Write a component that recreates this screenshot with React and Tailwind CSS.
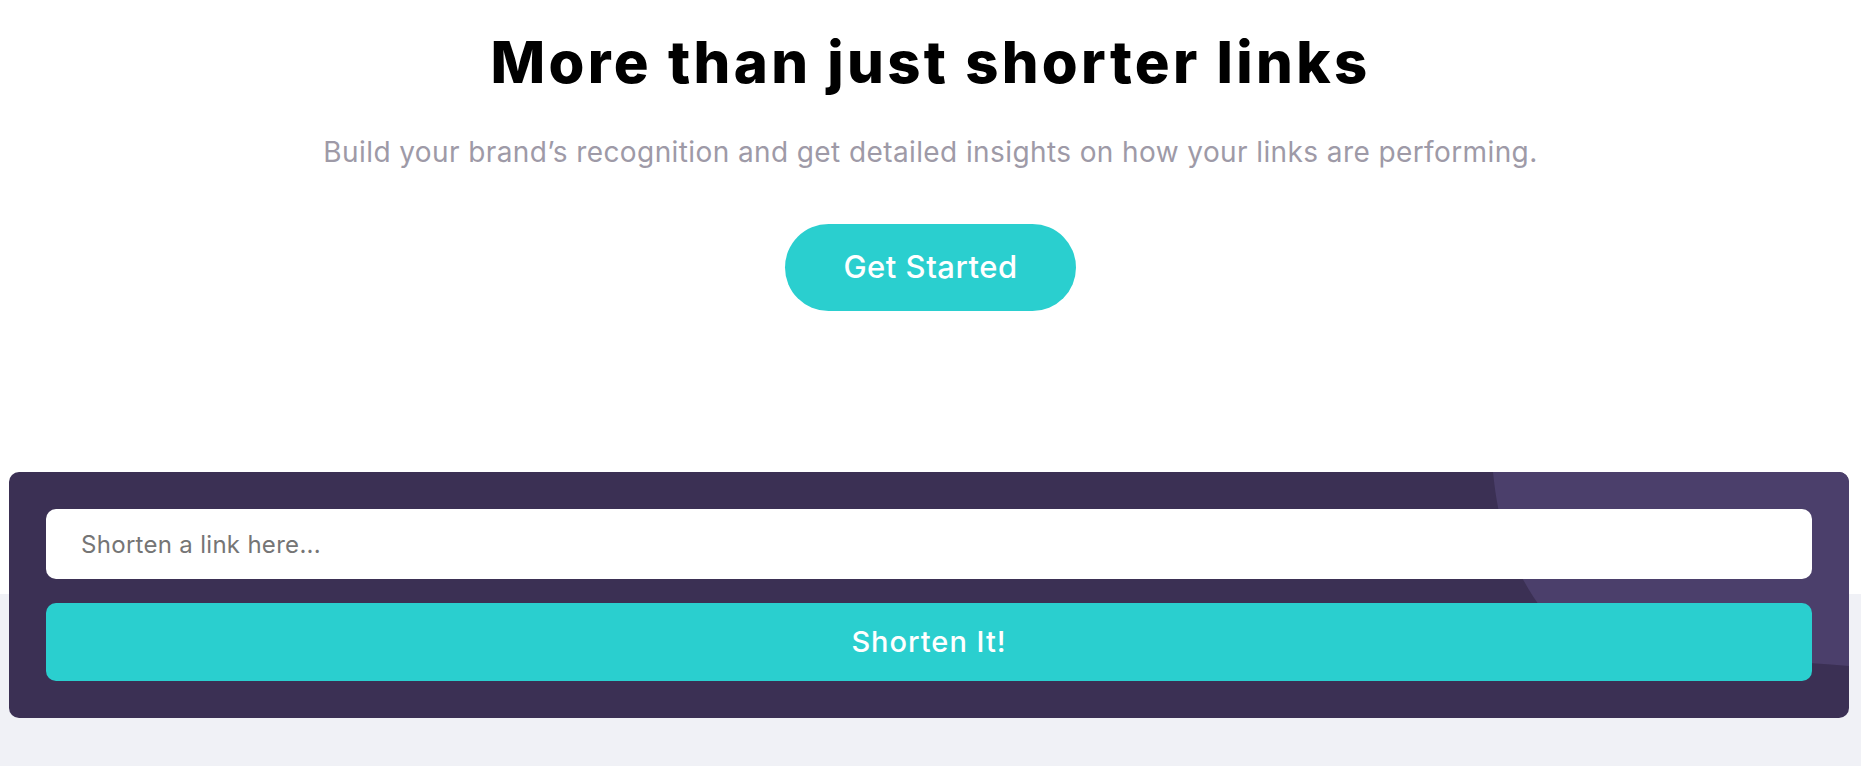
export default function App() {
  return (
    <div className="min-h-screen bg-[linear-gradient(to_bottom,#ffffff_594px,#f0f1f6_594px)] font-['Inter',sans-serif]">
      <section className="flex flex-col items-center pt-[33px] text-center">
        <h1 className="text-[58px] font-extrabold leading-none tracking-[3.3px] text-black">More than just shorter links</h1>
        <p className="mt-[47px] text-[28px] leading-none tracking-[0.4px] text-[#9e9aa7]">
          Build your brand’s recognition and get detailed insights on how your links are performing.
        </p>
        <a
          href="#"
          className="mt-[58px] flex h-[87px] w-[291px] items-center justify-center rounded-full bg-[#2acfcf] text-[31px] font-medium tracking-[0.5px] text-white"
        >
          Get Started
        </a>
      </section>

      <div className="pl-[9px] pr-[12px] pt-[161px]">
        <form className="relative flex flex-col gap-[24px] overflow-hidden rounded-[10px] bg-[#3b3054] p-[37px]">
          <svg className="absolute right-0 top-0 h-[246px] w-[360px]" viewBox="0 0 360 246">
            <path d="M4 0 C10 60 25 100 55 140 C100 185 220 182 360 194 L360 0 Z" fill="#4b3f6b" />
          </svg>
          <input
            type="text"
            placeholder="Shorten a link here..."
            className="relative h-[70px] w-full rounded-[10px] bg-white px-[35px] text-[24px] tracking-[0.3px] text-[#333] outline-none placeholder:text-[#757575]"
          />
          <button
            type="button"
            className="relative h-[78px] w-full rounded-[10px] bg-[#2acfcf] text-[29px] font-medium tracking-[1px] text-white"
          >
            Shorten It!
          </button>
        </form>
      </div>
    </div>
  );
}
